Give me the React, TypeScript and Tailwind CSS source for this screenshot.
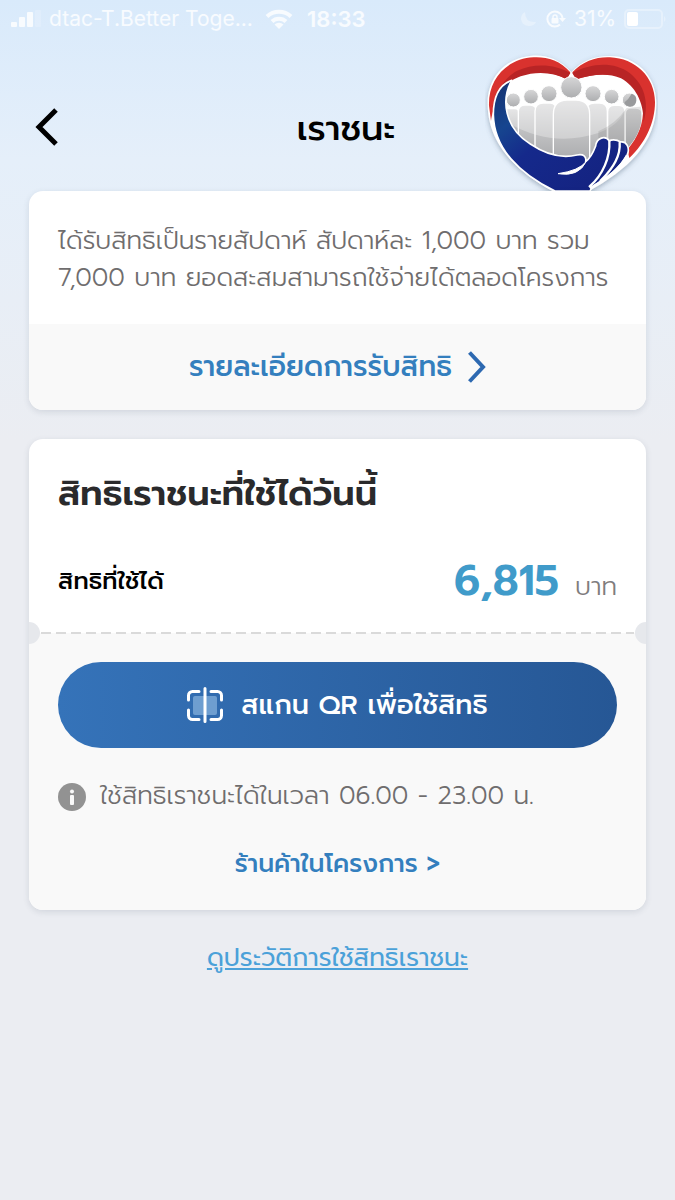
import type { ReactNode } from "react";

function StatusBar() {
  return (
    <div className="flex h-[38px] items-center justify-between pl-[11px] pr-[9px] font-['Inter','Liberation_Sans',sans-serif] text-[21px] text-white/80">
      <div className="flex items-center">
        <svg viewBox="0 0 30 18" className="h-[18px] w-[30px]" fill="currentColor" aria-hidden="true">
          <rect x="0" y="12" width="6" height="5" rx="1" />
          <rect x="8" y="7" width="6" height="10" rx="1" />
          <rect x="16" y="2" width="6" height="15" rx="1" />
          <rect x="24" y="0" width="6" height="17" rx="1" opacity="0.2" />
        </svg>
        <span className="ml-2 w-[204px] whitespace-nowrap">dtac-T.Better Toge...</span>
        <svg viewBox="0 0 28 20" className="ml-3 h-5 w-7" fill="none" stroke="currentColor" strokeWidth="4" aria-hidden="true">
          <path d="M2 7.5a17.5 17.5 0 0 1 24 0" />
          <path d="M7 12.5a10 10 0 0 1 14 0" />
          <path d="M9.500 15.500a7 7 0 0 1 9 0L14 20z" fill="currentColor" stroke="none" />
        </svg>
        <span className="ml-3.5 text-[22px] font-semibold">18:33</span>
      </div>
      <div className="flex items-center">
        <svg viewBox="0 0 16 18" className="h-[18px] w-4 opacity-40" fill="currentColor" aria-hidden="true">
          <path d="M5 2Q1 4 1 9Q2 16 9 16Q14 16 16 12Q5 13 5 2z" />
        </svg>
        <svg viewBox="0 0 20 18" className="ml-2.5 h-[18px] w-5" fill="none" stroke="currentColor" strokeWidth="2" aria-hidden="true">
          <path d="M14 3.500A7.500 7.500 0 1 0 14 14.500M14 3.500Q16 5 16.500 8" />
          <path d="M13 8h7L16.500 12z" fill="currentColor" stroke="none" />
          <rect x="5.500" y="8" width="7" height="5.500" rx="1" fill="currentColor" stroke="none" />
          <path d="M7 8.500V7a2 2 0 0 1 4 0v1.500" strokeWidth="1.500" />
        </svg>
        <span className="ml-2 w-[42px] whitespace-nowrap">31%</span>
        <svg viewBox="0 0 42 20" className="ml-2 h-5 w-[42px]" aria-hidden="true">
          <rect x="1" y="1" width="37" height="18" rx="4" fill="none" stroke="currentColor" strokeWidth="2" opacity="0.4" />
          <rect x="3" y="3" width="11" height="14" rx="2" fill="white" />
          <path d="M40 7q3 3 0 6z" fill="currentColor" opacity="0.4" />
        </svg>
      </div>
    </div>
  );
}

function HeartLogo() {
  return (
    <svg viewBox="30 40 519 414" className="h-[138px] w-[173px] justify-self-end overflow-hidden" role="img" aria-label="เราชนะ">
      <defs>
        <linearGradient id="person" x1="0" y1="0" x2="0" y2="1">
          <stop offset="0" stopColor="#dcdcdd" />
          <stop offset="1" stopColor="#a8a9ab" />
        </linearGradient>
        <linearGradient id="head" x1="0" y1="0" x2="0" y2="1">
          <stop offset="0" stopColor="#d7d7d8" />
          <stop offset="1" stopColor="#acadaf" />
        </linearGradient>
        <linearGradient id="sleeve" x1="0" y1="0" x2="1" y2="1">
          <stop offset="0" stopColor="#17316f" />
          <stop offset="0.25" stopColor="#16458f" />
          <stop offset="0.45" stopColor="#15298b" />
          <stop offset="1" stopColor="#14217e" />
        </linearGradient>
        <filter id="logoShadow" x="-10%" y="-10%" width="120%" height="125%">
          <feDropShadow dx="0" dy="6" stdDeviation="8" floodColor="#4c6379" floodOpacity="0.45" />
        </filter>
        <clipPath id="inner">
          <path d="M95 208C95 130 130 103 186 103C222 103 248 112 270 120L310 122C340 105 360 103 390 103C460 108 500 160 500 230C500 270 480 300 455 330L420 360H230C150 330 100 280 95 208Z" />
        </clipPath>
      </defs>
      <path
        d="M289 98C252 55 208 45 170 48C90 55 38 115 38 190C37 315 130 400 240 458H335C460 390 544 310 544 190C544 105 480 49 405 49C355 50 320 64 289 98Z"
        fill="white"
        filter="url(#logoShadow)"
      />
      <path d="M286 98C255 61 213 51 176 53C92 57 39 122 42 198L48 244C54 207 76 137 110 118C150 90 220 90 275 119Z" fill="#d9322e" />
      <path d="M292 98C323 64 366 51 405 53C480 56 540 111 540 188C540 250 510 312 463 355L457 330C490 292 506 250 504 205C499 143 457 107 398 105C365 103 340 108 303 119Z" fill="#d9322e" />
      <path d="M286 100C238 72 177 70 127 93C93 110 64 151 51 206C68 160 94 125 137 110C184 94 234 97 275 119Z" fill="#b82425" />
      <path d="M292 100C349 69 417 65 464 100C508 135 523 187 506 247C506 186 480 139 438 116C398 98 350 105 303 119Z" fill="#b82425" />
      <g clipPath="url(#inner)">
        <g fill="url(#person)" stroke="white" strokeWidth="4">
          <path d="M90 300V207H120Q132 207 132 222V300Z" />
          <path d="M130 340V215Q130 196 151 196H166Q184 196 184 216V340Z" />
          <path d="M180 365V215Q180 190 205 190H226Q244 190 244 214V365Z" />
          <path d="M334 365V214Q334 190 358 190H374Q397 190 397 215V365Z" />
          <path d="M398 365V216Q398 197 419 197H432Q450 197 450 218V365Z" />
          <path d="M451 340V222Q451 205 468 205H483Q502 205 502 226V340Z" />
          <path d="M235 370V225Q235 181 276 181H303Q344 181 344 225V370Z" />
        </g>
        <path d="M90 170H460Q455 250 370 280Q230 325 100 250Z" fill="white" opacity="0.3" />
        <path d="M455 205Q420 255 370 275V350H510V200Z" fill="#777" opacity="0.2" />
      </g>
      <g fill="url(#head)" stroke="white" strokeWidth="3">
        <circle cx="115" cy="181" r="21" />
        <circle cx="168" cy="171" r="22" />
        <circle cx="222" cy="162" r="24" />
        <circle cx="289" cy="143" r="32" />
        <circle cx="354" cy="162" r="24" />
        <circle cx="410" cy="171" r="22" />
        <circle cx="463" cy="181" r="21" />
      </g>
      <path d="M470 162A20 20 0 0 1 466 201Q451 200 449 188Q461 178 470 162Z" fill="#999a9c" />
      <path
        d="M110 122C68 137 55 180 55 225C57 325 132 402 240 454H345C349 443 357 437 369 431C415 403 438 376 456 347C467 324 453 304 437 307C422 298 408 300 403 304C391 286 365 294 362 319C353 343 344 357 332 366C335 350 325 342 306 346C253 359 209 342 166 313C89 265 77 182 110 122Z"
        fill="url(#sleeve)"
        stroke="white"
        strokeWidth="5"
        strokeLinejoin="round"
      />
      <path d="M249 402Q311 413 334 365Q313 393 249 402Z" fill="white" stroke="white" strokeWidth="3" />
      <path d="M403 305C406 351 384 406 344 440M434 309C437 347 416 385 377 423" fill="none" stroke="white" strokeWidth="7" strokeLinecap="round" />
      <path d="M456 347C438 385 400 412 345 446" fill="none" stroke="white" strokeWidth="7" />
    </svg>
  );
}

function ScanIcon() {
  return (
    <svg viewBox="0 0 36 36" className="size-9" fill="none" stroke="white" strokeWidth="3" strokeLinecap="round" aria-hidden="true">
      <rect x="6" y="9" width="24" height="19" rx="2" fill="#83afdb" fillOpacity="0.75" stroke="none" />
      <path d="M12 4.500H5.500a4 4 0 0 0-4 4V13M1.500 23v5.500a4 4 0 0 0 4 4H12M24 4.500h6.500a4 4 0 0 1 4 4V13M34.500 23v5.500a4 4 0 0 1-4 4H24M18 1.500v33" />
    </svg>
  );
}

function InfoIcon() {
  return (
    <svg viewBox="0 0 28 28" className="size-7" aria-hidden="true">
      <circle cx="14" cy="14" r="14" fill="#929292" />
      <circle cx="14" cy="8.500" r="2" fill="#f9f9f9" />
      <rect x="12" y="12" width="4" height="10" rx="1" fill="#f9f9f9" />
    </svg>
  );
}

function Card({ children }: { children: ReactNode }) {
  return (
    <section className="relative overflow-hidden rounded-[14px] bg-white shadow-[0_2px_6px_rgba(60,70,90,0.14)]">
      {children}
    </section>
  );
}

export default function App() {
  return (
    <div className="min-h-screen bg-[#ebedf2] bg-[linear-gradient(180deg,#d9eafb_0px,#e5effa_160px,#ebedf2_440px)] font-['Prompt','Kanit','Noto_Sans',sans-serif]">
      <StatusBar />
      <header className="grid grid-cols-[1fr_auto_1fr] items-end pl-[34px] pr-[17px] pt-[15px]">
        <button type="button" aria-label="ย้อนกลับ" className="mb-11 flex h-10 w-7 items-center">
          <svg viewBox="0 0 28 40" className="h-10 w-7" fill="none" stroke="black" strokeWidth="5" aria-hidden="true">
            <path d="M22 3L5 20L22 37" />
          </svg>
        </button>
        <h1 className="mb-[42px] text-[35px] leading-10 font-medium text-black">เราชนะ</h1>
        <HeartLogo />
      </header>

      <main className="flex flex-col gap-[29px] px-[29px]">
        <Card>
          <p className="px-[29px] pt-8 pb-[27px] text-[25px] leading-[37px] font-light text-[#6f6d6e]">
            ได้รับสิทธิเป็นรายสัปดาห์ สัปดาห์ละ 1,000 บาท รวม
            <br />
            7,000 บาท ยอดสะสมสามารถใช้จ่ายได้ตลอดโครงการ
          </p>
          <a href="#details" className="flex h-[86px] items-center justify-center gap-4 bg-[#f9f9f9] text-[28px] font-medium text-[#347fbe]">
            รายละเอียดการรับสิทธิ
            <svg viewBox="0 0 18 32" className="h-8 w-[18px]" fill="none" stroke="#2d69b1" strokeWidth="4" aria-hidden="true">
              <path d="M1.500 1.500L15 16L1.500 30.500" />
            </svg>
          </a>
        </Card>

        <Card>
          <div className="px-[29px] pt-8">
            <h2 className="text-[35px] leading-[46px] font-semibold text-[#2a2a2c]">สิทธิเราชนะที่ใช้ได้วันนี้</h2>
            <div className="flex h-[116px] items-center justify-between pt-9 pb-6">
              <span className="text-[24px] font-medium text-black">สิทธิที่ใช้ได้</span>
              <div className="flex items-baseline gap-4">
                <span className="text-[42px] leading-[56px] font-semibold text-[#409bca]">6,815</span>
                <span className="text-[25px] font-light text-[#7f7d7e]">บาท</span>
              </div>
            </div>
          </div>
          <div className="relative bg-[#f9f9f9] px-[29px] pt-[29px] pb-[25px]">
            <svg className="absolute inset-x-3 -top-px h-0.5 w-[calc(100%-24px)]" aria-hidden="true">
              <line x1="0" y1="1" x2="100%" y2="1" stroke="#dadada" strokeWidth="2" strokeDasharray="10 5" />
            </svg>
            <span className="absolute -top-[11px] -left-[11px] size-[22px] rounded-full bg-[#e6e8ec]" />
            <span className="absolute -top-[11px] -right-[11px] size-[22px] rounded-full bg-[#e6e8ec]" />
            <button
              type="button"
              className="flex h-[86px] w-full items-center justify-center gap-[18px] rounded-full bg-linear-to-r from-[#3573b9] to-[#265795] text-[27px] font-medium text-white"
            >
              <ScanIcon />
              สแกน QR เพื่อใช้สิทธิ
            </button>
            <div className="mt-[29px] flex h-10 items-center gap-[14px] text-[25px] font-light text-[#6f6d6e]">
              <InfoIcon />
              ใช้สิทธิเราชนะได้ในเวลา 06.00 - 23.00 น.
            </div>
            <a href="#shops" className="mt-7 flex h-10 items-center justify-center text-[25px] font-medium text-[#347fbe]">
              ร้านค้าในโครงการ &gt;
            </a>
          </div>
        </Card>

        <a href="#history" className="flex h-10 items-center self-center text-[25px] text-[#4ba1d9] underline">
          ดูประวัติการใช้สิทธิเราชนะ
        </a>
      </main>
    </div>
  );
}
